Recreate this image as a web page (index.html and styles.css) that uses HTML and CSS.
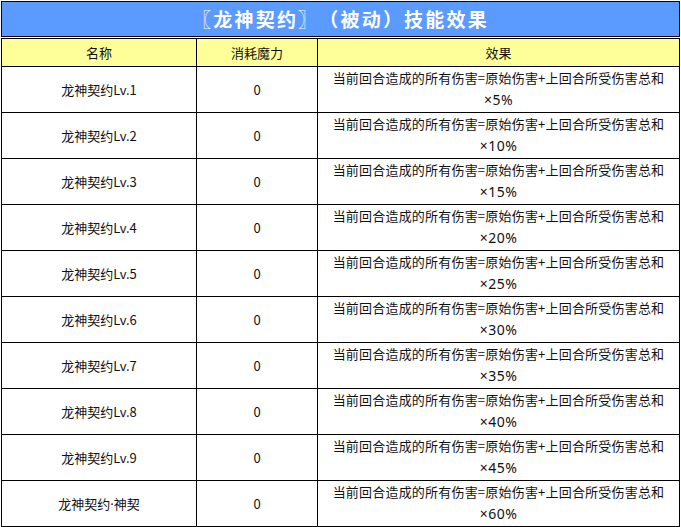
FILE: index.html
```html
<!DOCTYPE html>
<html lang="zh">
<head>
<meta charset="utf-8">
<title>龙神契约</title>
<link rel="stylesheet" href="styles.css">
</head>
<body>
<div class="page">
  <div class="title">〖龙神契约〗（被动）技能效果</div>
  <table class="skill">
    <colgroup>
      <col class="c-name">
      <col class="c-cost">
      <col class="c-effect">
    </colgroup>
    <thead>
      <tr class="head"><th>名称</th><th>消耗魔力</th><th>效果</th></tr>
    </thead>
    <tbody>
      <tr><td>龙神契约Lv.1</td><td>0</td><td class="eff">当前回合造成的所有伤害=原始伤害+上回合所受伤害总和<br><span class="pct">×5%</span></td></tr>
      <tr><td>龙神契约Lv.2</td><td>0</td><td class="eff">当前回合造成的所有伤害=原始伤害+上回合所受伤害总和<br><span class="pct">×10%</span></td></tr>
      <tr><td>龙神契约Lv.3</td><td>0</td><td class="eff">当前回合造成的所有伤害=原始伤害+上回合所受伤害总和<br><span class="pct">×15%</span></td></tr>
      <tr><td>龙神契约Lv.4</td><td>0</td><td class="eff">当前回合造成的所有伤害=原始伤害+上回合所受伤害总和<br><span class="pct">×20%</span></td></tr>
      <tr><td>龙神契约Lv.5</td><td>0</td><td class="eff">当前回合造成的所有伤害=原始伤害+上回合所受伤害总和<br><span class="pct">×25%</span></td></tr>
      <tr><td>龙神契约Lv.6</td><td>0</td><td class="eff">当前回合造成的所有伤害=原始伤害+上回合所受伤害总和<br><span class="pct">×30%</span></td></tr>
      <tr><td>龙神契约Lv.7</td><td>0</td><td class="eff">当前回合造成的所有伤害=原始伤害+上回合所受伤害总和<br><span class="pct">×35%</span></td></tr>
      <tr><td>龙神契约Lv.8</td><td>0</td><td class="eff">当前回合造成的所有伤害=原始伤害+上回合所受伤害总和<br><span class="pct">×40%</span></td></tr>
      <tr><td>龙神契约Lv.9</td><td>0</td><td class="eff">当前回合造成的所有伤害=原始伤害+上回合所受伤害总和<br><span class="pct">×45%</span></td></tr>
      <tr><td>龙神契约<span class="dot">·</span>神契</td><td>0</td><td class="eff">当前回合造成的所有伤害=原始伤害+上回合所受伤害总和<br><span class="pct">×60%</span></td></tr>
    </tbody>
  </table>
</div>
</body>
</html>
```

FILE: styles.css
```css
html, body {
  margin: 0;
  padding: 0;
  background: #ffffff;
}

.page {
  padding: 1px 0 0 1px;
  width: 679px;
  font-family: "Noto Sans CJK SC", "Noto Sans", "DejaVu Sans", sans-serif;
  color: #111111;
  text-spacing-trim: space-all;
}

.title {
  box-sizing: border-box;
  height: 36px;
  border: 1px solid #000000;
  background: #5b9aff;
  color: #ffffff;
  font-size: 19px;
  font-weight: bold;
  line-height: 34px;
  text-align: center;
  letter-spacing: 2.2px;
  text-spacing-trim: space-all;
}

.skill {
  margin-top: 1px;
  width: 679px;
  border-collapse: collapse;
  table-layout: fixed;
  font-size: 13px;
}

.c-name { width: 195px; }
.c-cost { width: 121px; }
.c-effect { width: 362px; }

.skill th,
.skill td {
  border: 1px solid #000000;
  padding: 0;
  text-align: center;
  vertical-align: middle;
  font-weight: normal;
}

.head th {
  background: #ffff99;
  height: 27px;
  line-height: 27px;
}

.skill td {
  height: 45px;
  line-height: 22px;
}

.skill td.eff {
  vertical-align: top;
  line-height: 22px;
  letter-spacing: 0.2px;
}

.pct {
  font-family: "Noto Sans", "DejaVu Sans", sans-serif;
  font-size: 14px;
  letter-spacing: 0.5px;
}

.dot {
  font-family: "Noto Sans", "DejaVu Sans", sans-serif;
}
```
